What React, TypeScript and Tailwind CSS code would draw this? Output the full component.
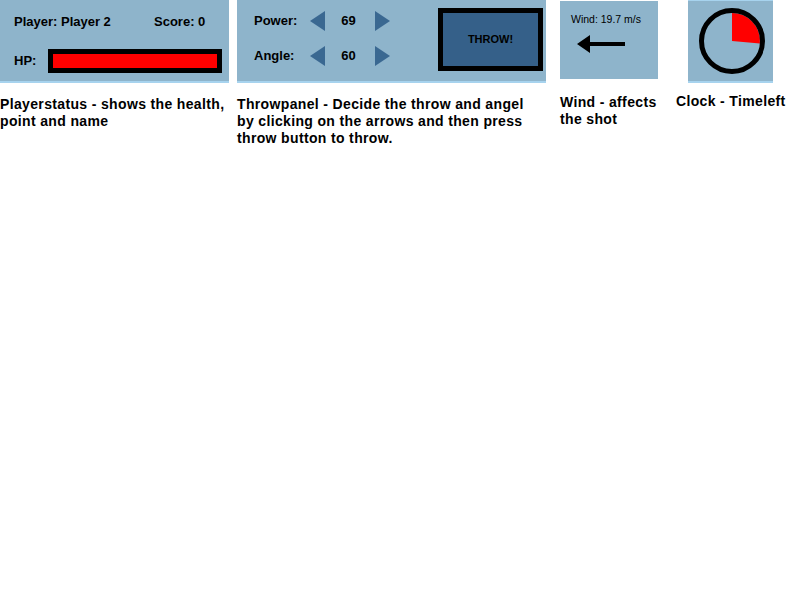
import React from "react";

const panelFont = { fontFamily: '"Liberation Sans", Arial, sans-serif' };

function Arrow({ dir }: { dir: "left" | "right" }) {
    return (
        <svg width="15" height="20" viewBox="0 0 15 20" className="shrink-0">
            {dir === "left" ? (
                <polygon points="15,0 15,20 0,10" fill="#3a6891" />
            ) : (
                <polygon points="0,0 0,20 15,10" fill="#3a6891" />
            )}
        </svg>
    );
}

function Stepper({ label, value }: { label: string; value: number }) {
    return (
        <div className="flex items-center h-5">
            <span className="w-[56px] text-[13px] font-bold">{label}</span>
            <Arrow dir="left" />
            <span className="w-[50px] text-center text-[13px] font-bold pr-[3px]">{value}</span>
            <Arrow dir="right" />
        </div>
    );
}

function Caption({ children, className = "" }: { children: React.ReactNode; className?: string }) {
    return (
        <p className={`text-[14px] font-bold leading-[17px] tracking-[0.35px] text-black whitespace-nowrap ${className}`}>
            {children}
        </p>
    );
}

export default function App() {
    return (
        <div className="w-[800px] h-[600px] bg-white text-black" style={panelFont}>
            <div className="flex items-start">
                {/* player status */}
                <div className="w-[229px] shrink-0">
                    <div className="h-[83px] bg-[#8eb4cb] border-b-2 border-[#a7d3ee] pl-[14px] pt-[12px]">
                        <div className="flex text-[13px] font-bold">
                            <span className="w-[140px]">Player: Player 2</span>
                            <span>Score: 0</span>
                        </div>
                        <div className="mt-[17px] flex items-center">
                            <span className="w-[34px] shrink-0 text-[13px] font-bold">HP:</span>
                            <div className="w-[174px] h-[24px] shrink-0 border-[5px] border-black bg-[#ff0000]" />
                        </div>
                    </div>
                    <Caption className="mt-[13px]">
                        Playerstatus - shows the health,
                        <br />
                        point and name
                    </Caption>
                </div>

                {/* throw panel */}
                <div className="ml-[8px] w-[309px] shrink-0">
                    <div className="h-[83px] bg-[#8eb4cb] border-b-2 border-[#a7d3ee] flex items-start pl-[17px] pt-[10px]">
                        <div className="flex flex-col gap-[15px] pt-[1px]">
                            <Stepper label="Power:" value={69} />
                            <Stepper label="Angle:" value={60} />
                        </div>
                        <div className="ml-[48px] -mt-[2px] w-[105px] h-[63px] shrink-0 border-[5px] border-black bg-[#356089] flex items-center justify-center text-[11px] font-bold">
                            THROW!
                        </div>
                    </div>
                    <Caption className="mt-[13px]">
                        Throwpanel - Decide the throw and angel
                        <br />
                        by clicking on the arrows and then press
                        <br />
                        throw button to throw.
                    </Caption>
                </div>

                {/* wind */}
                <div className="ml-[14px] w-[110px] shrink-0">
                    <div className="mt-[1px] w-[98px] h-[78px] bg-[#8eb4cb] flex flex-col pt-[12px] pl-[11px]">
                        <span className="text-[10.5px] leading-[13px]">Wind: 19.7 m/s</span>
                        <svg width="50" height="20" viewBox="0 0 50 20" className="mt-[8px] ml-[6px]">
                            <polygon points="0,10 13,1 13,8 48,8 48,12 13,12 13,19" fill="#000" />
                        </svg>
                    </div>
                    <Caption className="mt-[15px]">
                        Wind - affects
                        <br />
                        the shot
                    </Caption>
                </div>

                {/* clock */}
                <div className="ml-[6px] w-[120px] shrink-0">
                    <div className="ml-[12px] w-[85px] h-[83px] bg-[#8eb4cb] border-t border-b-2 border-[#a7d3ee] flex items-center justify-center">
                        <svg width="68" height="68" viewBox="0 0 68 68" className="ml-[3px]">
                            <path d="M34 34 L34 6 A28 28 0 0 1 61.9 36.4 Z" fill="#ff0000" />
                            <circle cx="34" cy="34" r="30.5" fill="none" stroke="#000" strokeWidth="5" />
                        </svg>
                    </div>
                    <Caption className="mt-[10px]">Clock - Timeleft</Caption>
                </div>
            </div>
        </div>
    );
}
